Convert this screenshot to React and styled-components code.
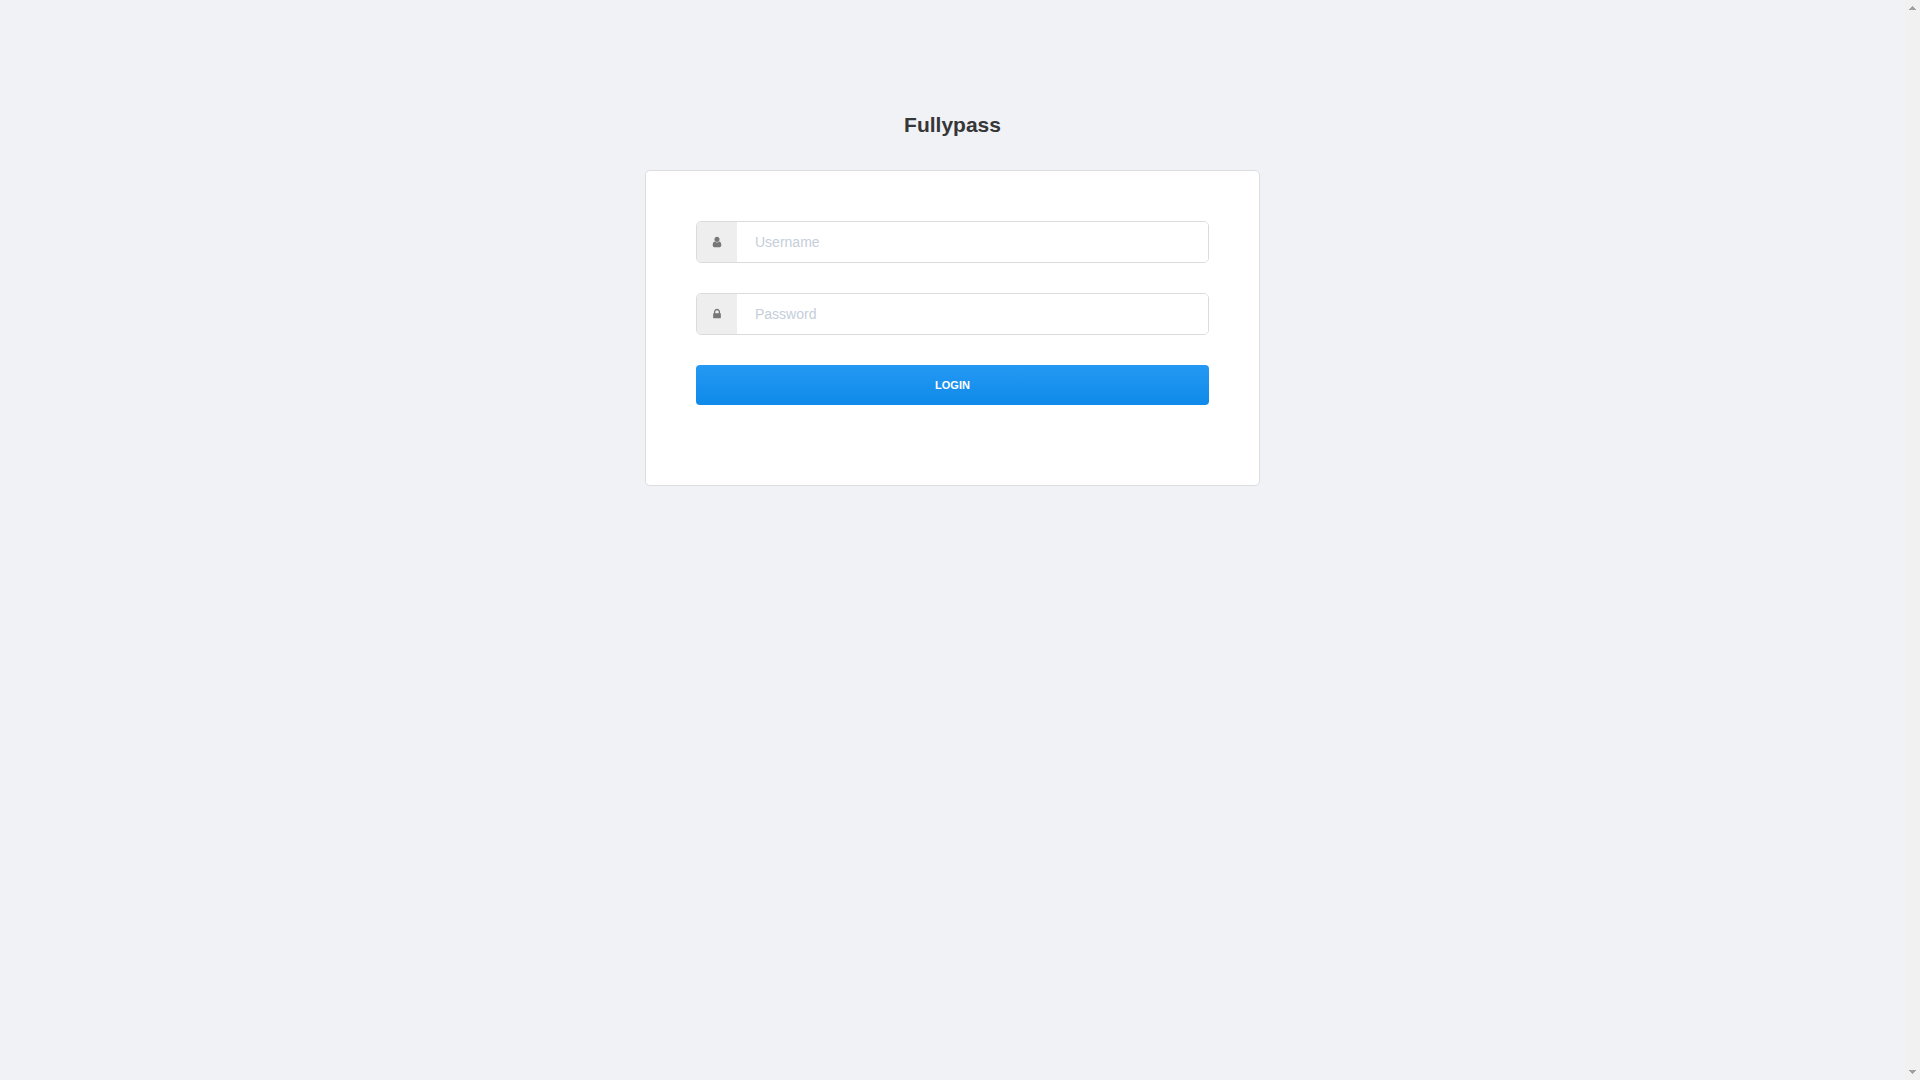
import React from "react";
import styled, { createGlobalStyle } from "styled-components";

const App = () => {
  const [username, setUsername] = React.useState("");
  const [password, setPassword] = React.useState("");

  const handleSubmit = (event) => {
    event.preventDefault();
  };

  return (
    <>
      <GlobalStyle />
      <Wrapper>
        <Main>
          <Title>Fullypass</Title>
          <Card onSubmit={handleSubmit}>
            <Field>
              <Addon htmlFor="username">
                <Icon viewBox="0 0 1792 1792" aria-hidden="true">
                  <path d="M1536 1399q0 109-62.5 187t-150.5 78h-854q-88 0-150.5-78t-62.5-187q0-85 8.5-160.5t31.5-152 58.5-131 94-89 134.5-34.5q131 128 313 128t313-128q76 0 134.5 34.5t94 89 58.5 131 31.5 152 8.5 160.5zm-256-887q0 159-112.5 271.5t-271.5 112.5-271.5-112.5-112.5-271.5 112.5-271.5 271.5-112.5 271.5 112.5 112.5 271.5z" />
                </Icon>
              </Addon>
              <Input
                id="username"
                type="text"
                placeholder="Username"
                value={username}
                onChange={(event) => setUsername(event.target.value)}
              />
            </Field>
            <Field>
              <Addon htmlFor="password">
                <Icon viewBox="0 0 1792 1792" aria-hidden="true">
                  <path d="M640 768h512v-192q0-106-75-181t-181-75-181 75-75 181v192zm832 96v576q0 40-28 68t-68 28h-960q-40 0-68-28t-28-68v-576q0-40 28-68t68-28h32v-192q0-184 132-316t316-132 316 132 132 316v192h32q40 0 68 28t28 68z" />
                </Icon>
              </Addon>
              <Input
                id="password"
                type="password"
                placeholder="Password"
                value={password}
                onChange={(event) => setPassword(event.target.value)}
              />
            </Field>
            <LoginButton type="submit">LOGIN</LoginButton>
          </Card>
        </Main>
        <ScrollRail aria-hidden="true">
          <Arrow viewBox="0 0 7 4">
            <path d="M3 0h1v1h1v1h1v1h1v1H0V3h1V2h1V1h1z" />
          </Arrow>
          <Arrow viewBox="0 0 7 4">
            <path d="M0 0h7v1H6v1H5v1H4v1H3V3H2V2H1V1H0z" />
          </Arrow>
        </ScrollRail>
      </Wrapper>
    </>
  );
};

const GlobalStyle = createGlobalStyle`
  * {
    box-sizing: border-box;
  }

  body {
    margin: 0;
    background: #f0f2f6;
    color: #363636;
    font-family: "Liberation Sans", Arial, sans-serif;
    font-size: 14px;
    line-height: 20px;
  }
`;

const Wrapper = styled.div`
  display: flex;
  min-height: 100vh;
`;

const Main = styled.main`
  flex: 1;
  display: flex;
  flex-direction: column;
  align-items: center;
  padding: 110px 15px 30px;
`;

const Title = styled.h1`
  margin: 0 0 30px;
  font-size: 21px;
  font-weight: bold;
  line-height: 30px;
`;

const Card = styled.form`
  width: 100%;
  max-width: 615px;
  padding: 50px 50px 80px;
  background: #ffffff;
  border: 1px solid #dddddd;
  border-radius: 5px;
`;

const Field = styled.div`
  display: flex;
  height: 42px;
  margin-bottom: 30px;
  border: 1px solid #dbdbdb;
  border-radius: 5px;
  overflow: hidden;
`;

const Addon = styled.label`
  display: flex;
  align-items: center;
  justify-content: center;
  width: 40px;
  background: #eeeeee;
`;

const Icon = styled.svg`
  width: 12px;
  height: 12px;
  fill: #777777;
`;

const Input = styled.input`
  flex: 1;
  min-width: 0;
  padding: 0 18px;
  border: 0;
  outline: 0;
  background: #ffffff;
  color: #333333;
  font-family: inherit;
  font-size: 14px;

  &::placeholder {
    color: #c5ced9;
    opacity: 1;
  }
`;

const LoginButton = styled.button`
  display: block;
  width: 100%;
  height: 40px;
  padding: 0;
  border: 0;
  border-radius: 4px;
  background: linear-gradient(#2499f3, #0f8ae9);
  color: #ffffff;
  font-family: inherit;
  font-size: 11px;
  font-weight: bold;
  cursor: pointer;
`;

const ScrollRail = styled.div`
  display: flex;
  flex-direction: column;
  align-items: center;
  justify-content: space-between;
  width: 15px;
  padding: 6px 0;
  background: #f1f1f1;
`;

const Arrow = styled.svg`
  width: 7px;
  height: 4px;
  fill: #a0a0a0;
  shape-rendering: crispEdges;
`;

export default App;
